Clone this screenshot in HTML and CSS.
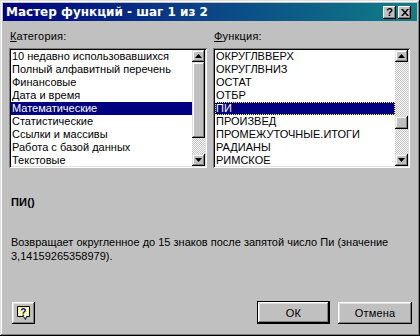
FILE: index.html
```html
<!DOCTYPE html>
<html lang="ru">
<head>
<meta charset="utf-8">
<title>Мастер функций</title>
<link rel="stylesheet" href="styles.css">
</head>
<body>
<div class="window">
  <div class="titlebar">
    <span class="title">Мастер функций - шаг 1 из 2</span>
    <div class="tbtns">
      <span class="tbtn q">?</span>
      <span class="tbtn x">
        <svg width="8" height="7" viewBox="0 0 8 7"><path d="M0 0h2l2 2.5L6 0h2L5 3.5 8 7H6L4 4.5 2 7H0l3-3.5z" fill="#000"/></svg>
      </span>
    </div>
  </div>
  <div class="content">
    <div class="cols">
      <div class="col left">
        <div class="label"><u>К</u>атегория:</div>
        <div class="listbox">
          <ul class="items">
            <li>10 недавно использовавшихся</li>
            <li>Полный алфавитный перечень</li>
            <li>Финансовые</li>
            <li>Дата и время</li>
            <li class="sel">Математические</li>
            <li>Статистические</li>
            <li>Ссылки и массивы</li>
            <li>Работа с базой данных</li>
            <li>Текстовые</li>
          </ul>
          <div class="sbar">
            <span class="arrow up"><svg width="7" height="4" viewBox="0 0 7 4"><path d="M3.5 0L7 4H0z" fill="#000"/></svg></span>
            <div class="track">
              <span class="thumb thumb-l"></span>
            </div>
            <span class="arrow down"><svg width="7" height="4" viewBox="0 0 7 4"><path d="M0 0h7L3.5 4z" fill="#000"/></svg></span>
          </div>
        </div>
      </div>
      <div class="col right">
        <div class="label"><u>Ф</u>ункция:</div>
        <div class="listbox">
          <ul class="items">
            <li>ОКРУГЛВВЕРХ</li>
            <li>ОКРУГЛВНИЗ</li>
            <li>ОСТАТ</li>
            <li>ОТБР</li>
            <li class="sel focus">ПИ</li>
            <li>ПРОИЗВЕД</li>
            <li>ПРОМЕЖУТОЧНЫЕ.ИТОГИ</li>
            <li>РАДИАНЫ</li>
            <li>РИМСКОЕ</li>
          </ul>
          <div class="sbar">
            <span class="arrow up"><svg width="7" height="4" viewBox="0 0 7 4"><path d="M3.5 0L7 4H0z" fill="#000"/></svg></span>
            <div class="track">
              <span class="gap-a"></span>
              <span class="thumb thumb-r"></span>
            </div>
            <span class="arrow down"><svg width="7" height="4" viewBox="0 0 7 4"><path d="M0 0h7L3.5 4z" fill="#000"/></svg></span>
          </div>
        </div>
      </div>
    </div>
    <div class="fname">ПИ()</div>
    <div class="desc">Возвращает округленное до 15 знаков после запятой число Пи (значение 3,14159265358979).</div>
    <div class="footer">
      <span class="btn help">
        <svg width="16" height="16" viewBox="0 0 16 16">
          <defs>
            <pattern id="dots" width="2" height="2" patternUnits="userSpaceOnUse">
              <rect width="2" height="2" fill="#ffffff"/>
              <rect width="1" height="1" fill="#ffff00"/>
            </pattern>
          </defs>
          <path d="M1.5 1.5h12v10h-3l-1 3-2-3h-6z" fill="url(#dots)" stroke="#000" stroke-width="1"/>
          <text x="7.5" y="10.5" text-anchor="middle" font-family="Liberation Sans, Arial, sans-serif" font-weight="bold" font-size="10" fill="#000080">?</text>
        </svg>
      </span>
      <span class="spacer"></span>
      <span class="btn ok"><span class="btn-in">ОК</span></span>
      <span class="btn cancel">Отмена</span>
    </div>
  </div>
</div>
</body>
</html>
```

FILE: styles.css
```css
* { box-sizing: border-box; }
html, body { margin: 0; padding: 0; }
body {
  width: 420px;
  height: 336px;
  background: #c0c0c0;
  font-family: "Liberation Sans", Arial, sans-serif;
  font-size: 11px;
  color: #000;
  overflow: hidden;
}
.window {
  width: 420px;
  height: 336px;
  background: #c0c0c0;
  padding: 3px;
  display: flex;
  flex-direction: column;
  box-shadow: inset -1px -1px #000, inset 1px 1px #dfdfdf, inset -2px -2px #808080, inset 2px 2px #fff;
}
.titlebar {
  height: 18px;
  flex: none;
  display: flex;
  align-items: center;
  justify-content: space-between;
  padding: 0 6px 0 3px;
  background: linear-gradient(90deg, #000080 0%, #0a3f88 45%, #0f7f86 100%);
}
.title {
  color: #fff;
  font-family: "DejaVu Sans", Verdana, sans-serif;
  font-weight: bold;
  font-size: 12px;
}
.tbtns { display: flex; gap: 2px; }
.tbtn {
  width: 13px;
  height: 13px;
  background: #c0c0c0;
  display: flex;
  align-items: center;
  justify-content: center;
  box-shadow: inset -1px -1px #000, inset 1px 1px #fff, inset -2px -2px #808080;
  font-weight: bold;
  font-size: 11px;
  line-height: 1;
}
.content {
  flex: 1;
  display: flex;
  flex-direction: column;
  padding: 0 5px 0 6px;
}
.cols { display: flex; gap: 6px; margin-top: 9px; }
.col { display: flex; flex-direction: column; }
.left { width: 198px; }
.right { width: 197px; }
.label { line-height: 13px; height: 13px; padding-left: 1px; margin-bottom: 5px; font-size: 11px; letter-spacing: 0.2px; }
.label u { text-decoration: underline; }
.listbox {
  height: 120px;
  display: flex;
  background: #fff;
  padding: 2px;
  box-shadow: inset 1px 1px #808080, inset -1px -1px #fff, inset 2px 2px #000, inset -2px -2px #dfdfdf;
}
.items {
  list-style: none;
  margin: 0;
  padding: 0;
  flex: 1;
  min-width: 0;
}
.items li {
  height: 13px;
  line-height: 13px;
  padding-left: 1px;
  white-space: nowrap;
  font-size: 11px;
}
.items li.sel { background: #000080; color: #fff; }
.items li.focus { outline: 1px dotted #ffff00; outline-offset: -1px; }
.sbar {
  width: 13px;
  display: flex;
  flex-direction: column;
}
.arrow {
  height: 12px;
  flex: none;
  background: #c0c0c0;
  display: flex;
  align-items: center;
  justify-content: center;
  box-shadow: inset -1px -1px #000, inset 1px 1px #dfdfdf, inset -2px -2px #808080, inset 2px 2px #fff;
}
.track {
  flex: 1;
  display: flex;
  flex-direction: column;
  background-color: #fff;
  background-image: repeating-conic-gradient(#c0c0c0 0 25%, #fff 0 50%);
  background-size: 2px 2px;
}
.thumb {
  flex: none;
  background: #c0c0c0;
  box-shadow: inset -1px -1px #000, inset 1px 1px #dfdfdf, inset -2px -2px #808080, inset 2px 2px #fff;
}
.thumb-l { height: 76px; }
.gap-a { height: 54px; flex: none; }
.thumb-r { height: 13px; }
.fname {
  font-weight: bold;
  margin-top: 28px;
  line-height: 13px;
  padding-left: 2px;
  font-size: 11px;
  letter-spacing: 0.2px;
}
.desc {
  margin-top: 26px;
  line-height: 14px;
  padding-left: 2px;
  font-size: 11px;
}
.footer {
  margin-top: auto;
  margin-bottom: 9px;
  display: flex;
  align-items: center;
  padding-left: 3px;
}
.spacer { flex: 1; }
.btn {
  height: 22px;
  background: #c0c0c0;
  display: flex;
  align-items: center;
  justify-content: center;
  box-shadow: inset -1px -1px #000, inset 1px 1px #fff, inset -2px -2px #808080, inset 2px 2px #dfdfdf;
  font-size: 11px;
  letter-spacing: 0.2px;
}
.help { width: 23px; }
.ok {
  width: 73px;
  height: 23px;
  border: 1px solid #000;
  box-shadow: none;
  padding: 0;
  margin-right: 8px;
}
.btn-in {
  width: 100%;
  height: 100%;
  display: flex;
  align-items: center;
  justify-content: center;
  box-shadow: inset -1px -1px #000, inset 1px 1px #fff, inset -2px -2px #808080, inset 2px 2px #dfdfdf;
}
.cancel { width: 74px; }
```
